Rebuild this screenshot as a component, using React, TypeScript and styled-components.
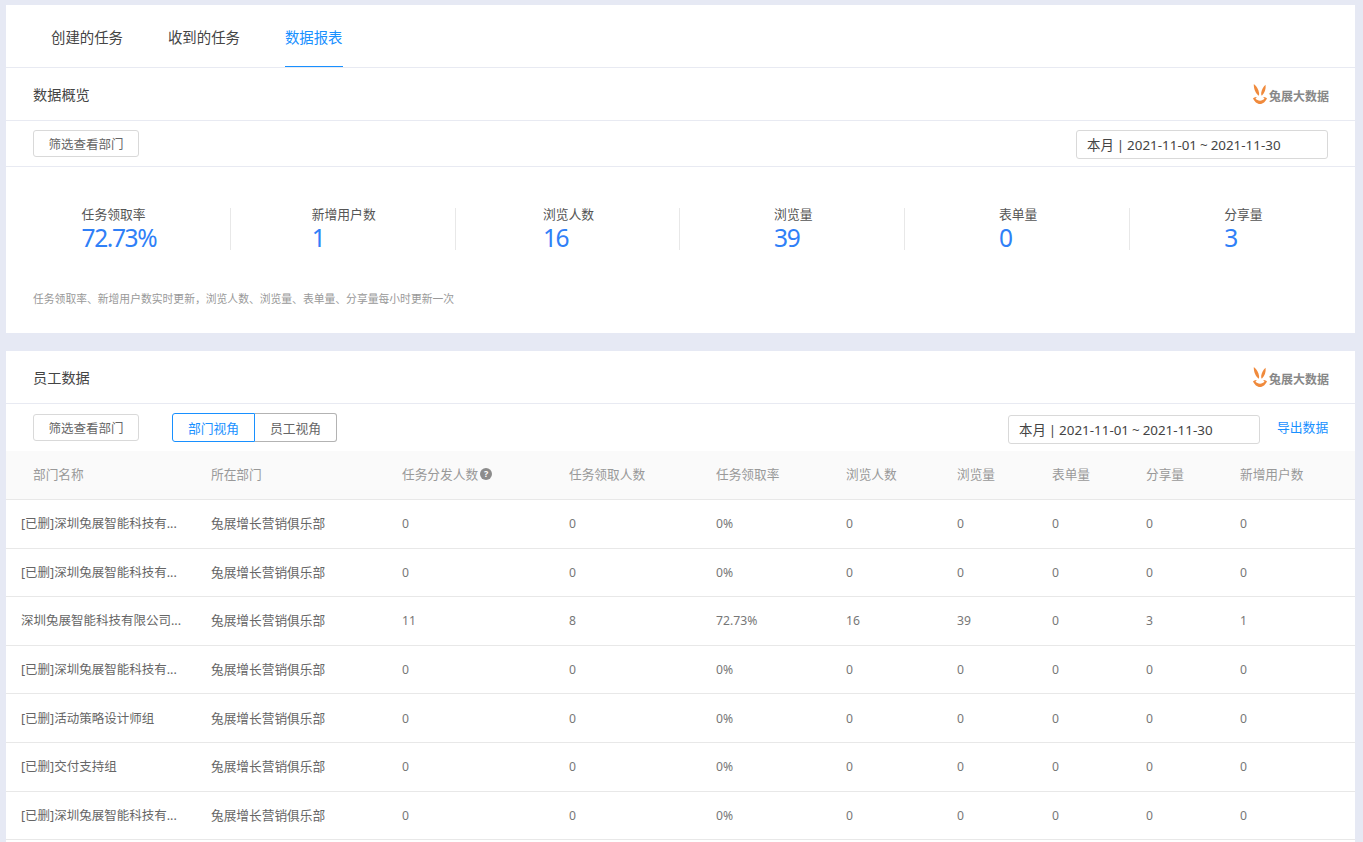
import React from 'react'
import styled, { createGlobalStyle } from 'styled-components'

const GlobalStyle = createGlobalStyle`
  html, body {
    margin: 0;
    height: 842px;
    overflow: hidden;
    background: #e6e9f4;
    font-family: 'Noto Sans', 'Noto Sans CJK SC', sans-serif;
  }
`
const Page = styled.div`
  padding: 5px 8px 0 6px;
  height: 837px;
  overflow: hidden;
  display: flex;
  flex-direction: column;
  gap: 18px;
`
const Card = styled.section<{ $fill?: boolean }>`
  background: #fff;
  flex: ${props => (props.$fill ? '1 0 auto' : '0 0 auto')};
`
const Tabs = styled.nav`
  display: flex;
  gap: 45px;
  height: 62px;
  padding-left: 45px;
  border-bottom: 1px solid #e8eaf2;
`
const Tab = styled.a<{ $active?: boolean }>`
  display: flex;
  align-items: center;
  height: 62px;
  box-sizing: border-box;
  padding-top: 1px;
  font-size: 14.4px;
  color: ${props => (props.$active ? '#1890ff' : '#444')};
  border-bottom: 1px solid ${props => (props.$active ? '#1890ff' : 'transparent')};
`
const SectionHead = styled.header`
  display: flex;
  align-items: center;
  justify-content: space-between;
  height: 52px;
  padding: 0 26px 0 27px;
  border-bottom: 1px solid #e8eaf2;
`
const SectionTitle = styled.h2`
  margin: 0 0 1px;
  font-size: 14.2px;
  font-weight: 400;
  color: #444;
`
const Logo = styled.div`
  display: flex;
  align-items: flex-start;
  gap: 2px;
  height: 20px;
  color: #888;
  font-size: 12px;
  font-weight: 700;
  line-height: 15px;
`
const LogoText = styled.span`
  padding-top: 5px;
`
const Toolbar = styled.div<{ $bordered?: boolean }>`
  display: flex;
  align-items: center;
  height: ${props => (props.$bordered ? '45px' : '47px')};
  padding: 0 ${props => (props.$bordered ? '27px' : '26px')} 0 27px;
  border-bottom: ${props => (props.$bordered ? '1px solid #e8eaf2' : '0')};
`
const FilterButton = styled.button`
  width: 106px;
  height: 27px;
  padding: 0;
  border: 1px solid #d9d9d9;
  border-radius: 3px;
  background: #fff;
  color: #666;
  font: inherit;
  font-size: 12.5px;
`
const Segmented = styled.div`
  display: flex;
  margin-left: 33px;
`
const Segment = styled.button<{ $active?: boolean }>`
  width: ${props => (props.$active ? '83px' : '82px')};
  height: 29px;
  padding: 0;
  background: #fff;
  font: inherit;
  font-size: 12.8px;
  color: ${props => (props.$active ? '#1890ff' : '#666')};
  border: 1px solid ${props => (props.$active ? '#1890ff' : '#b3b3b3')};
  border-left-width: ${props => (props.$active ? '1px' : '0')};
  border-radius: ${props => (props.$active ? '3px 0 0 3px' : '0 3px 3px 0')};
`
const DateBox = styled.div<{ $top: number }>`
  margin-left: auto;
  align-self: flex-start;
  margin-top: ${props => props.$top}px;
  width: 252px;
  height: 29px;
  box-sizing: border-box;
  padding: 0 0 2px 10px;
  border: 1px solid #d9d9d9;
  border-radius: 3px;
  display: flex;
  align-items: center;
  font-size: 13.4px;
  word-spacing: -0.5px;
  color: #444;
  white-space: nowrap;
`
const ExportLink = styled.a`
  margin-left: 17px;
  margin-bottom: 3px;
  width: 52px;
  color: #1890ff;
  font-size: 12.8px;
  white-space: nowrap;
`
const StatRow = styled.div`
  display: grid;
  grid-template-columns: repeat(6, 224.8px);
  padding-top: 41px;
`
const StatCell = styled.div<{ $last?: boolean }>`
  height: 42px;
  display: flex;
  justify-content: center;
  border-right: ${props => (props.$last ? '0' : '1px solid #e8e8e8')};
`
const StatInner = styled.div`
  display: flex;
  flex-direction: column;
  align-items: flex-start;
  margin-left: 2px;
`
const StatLabel = styled.span`
  margin-top: -2px;
  font-size: 12.8px;
  line-height: 17px;
  color: #555;
`
const StatValue = styled.span`
  font-size: 24.5px;
  letter-spacing: -1.4px;
  line-height: 29px;
  color: #2f80f7;
`
const Note = styled.p`
  margin: 41px 0 0 27px;
  padding-bottom: 26px;
  font-size: 10.8px;
  line-height: 16px;
  color: #999;
`
const GRID = '190px 191px 167px 147px 130px 111px 95px 94px 94px 1fr'
const TableHead = styled.div`
  display: grid;
  grid-template-columns: ${GRID};
  height: 48px;
  padding-left: 15px;
  align-items: center;
  background: #fafafa;
  border-bottom: 1px solid #e8e8e8;
`
const HeadCell = styled.div<{ $first?: boolean }>`
  display: flex;
  align-items: center;
  gap: 2px;
  padding-left: ${props => (props.$first ? '12px' : '0')};
  padding-bottom: 3px;
  font-size: 12.7px;
  color: #999;
`
const HelpDot = styled.span`
  width: 12px;
  height: 12px;
  border-radius: 50%;
  background: #8c8c8c;
  color: #fff;
  font-size: 9px;
  font-weight: 700;
  line-height: 12px;
  text-align: center;
`
const Row = styled.div`
  display: grid;
  grid-template-columns: ${GRID};
  height: 47.6px;
  padding-left: 15px;
  align-items: center;
  border-bottom: 1px solid #e8e8e8;
`
const Cell = styled.div`
  padding-bottom: 2px;
  font-size: 12.7px;
  color: #666;
  white-space: nowrap;
`
const NameCell = styled(Cell)`
  font-size: 12.5px;
`
const NumCell = styled(Cell)`
  padding-bottom: 0;
  font-size: 12.2px;
  color: #777;
`

const stats = [
  ['任务领取率', '72.73%'],
  ['新增用户数', '1'],
  ['浏览人数', '16'],
  ['浏览量', '39'],
  ['表单量', '0'],
  ['分享量', '3']
]
const columns = ['部门名称', '所在部门', '任务分发人数', '任务领取人数', '任务领取率', '浏览人数', '浏览量', '表单量', '分享量', '新增用户数']
const zeros = ['0', '0', '0%', '0', '0', '0', '0', '0']
const rows = [
  { name: '[已删]深圳兔展智能科技有...', values: zeros },
  { name: '[已删]深圳兔展智能科技有...', values: zeros },
  { name: '深圳兔展智能科技有限公司...', values: ['11', '8', '72.73%', '16', '39', '0', '3', '1'] },
  { name: '[已删]深圳兔展智能科技有...', values: zeros },
  { name: '[已删]活动策略设计师组', values: zeros },
  { name: '[已删]交付支持组', values: zeros },
  { name: '[已删]深圳兔展智能科技有...', values: zeros }
]

const BrandLogo = () => (
  <Logo>
    <svg width='14' height='20' viewBox='0 0 14 20'>
      <g fill='#f08a3c'>
        <path d='M.8 0c2.700 2.200 4.900 5.500 5.300 9.200.1 1-.1 1.900-.5 2.600C2.900 9.500.6 5.500.8 0z' />
        <path d='M12.600.8c.5 4.400-1 8.300-3.800 11-.6-.8-.8-1.800-.6-3C8.700 5.700 10.400 2.700 12.600.8z' />
        <path d='M0 14.200c1.300-.8 2.600-1.200 4-1.200-.6.500-1.100 1-1.500 1.500 1.100 1.300 2.700 2.200 4.500 2.200s3.400-.9 4.500-2.200c-.4-.5-.9-1-1.500-1.500 1.400 0 2.700.4 4 1.200C12.600 17.600 10 20 7 20s-5.600-2.400-7-5.800z' />
      </g>
    </svg>
    <LogoText>兔展大数据</LogoText>
  </Logo>
)

const App = () => (
  <>
    <GlobalStyle />
    <Page>
      <Card>
        <Tabs>
          <Tab>创建的任务</Tab>
          <Tab>收到的任务</Tab>
          <Tab $active>数据报表</Tab>
        </Tabs>
        <SectionHead>
          <SectionTitle>数据概览</SectionTitle>
          <BrandLogo />
        </SectionHead>
        <Toolbar $bordered>
          <FilterButton>筛选查看部门</FilterButton>
          <DateBox $top={9}>本月 | 2021-11-01 ~ 2021-11-30</DateBox>
        </Toolbar>
        <StatRow>
          {stats.map(([label, value], i) => (
            <StatCell key={label} $last={i === stats.length - 1}>
              <StatInner>
                <StatLabel>{label}</StatLabel>
                <StatValue>{value}</StatValue>
              </StatInner>
            </StatCell>
          ))}
        </StatRow>
        <Note>任务领取率、新增用户数实时更新，浏览人数、浏览量、表单量、分享量每小时更新一次</Note>
      </Card>
      <Card $fill>
        <SectionHead>
          <SectionTitle>员工数据</SectionTitle>
          <BrandLogo />
        </SectionHead>
        <Toolbar>
          <FilterButton>筛选查看部门</FilterButton>
          <Segmented>
            <Segment $active>部门视角</Segment>
            <Segment>员工视角</Segment>
          </Segmented>
          <DateBox $top={11}>本月 | 2021-11-01 ~ 2021-11-30</DateBox>
          <ExportLink>导出数据</ExportLink>
        </Toolbar>
        <TableHead>
          {columns.map((col, i) => (
            <HeadCell key={col} $first={i === 0}>
              {col}
              {i === 2 && <HelpDot>?</HelpDot>}
            </HeadCell>
          ))}
        </TableHead>
        {rows.map((row, i) => (
          <Row key={i}>
            <NameCell>{row.name}</NameCell>
            <Cell>兔展增长营销俱乐部</Cell>
            {row.values.map((v, j) => (
              <NumCell key={j}>{v}</NumCell>
            ))}
          </Row>
        ))}
      </Card>
    </Page>
  </>
)

export default App
